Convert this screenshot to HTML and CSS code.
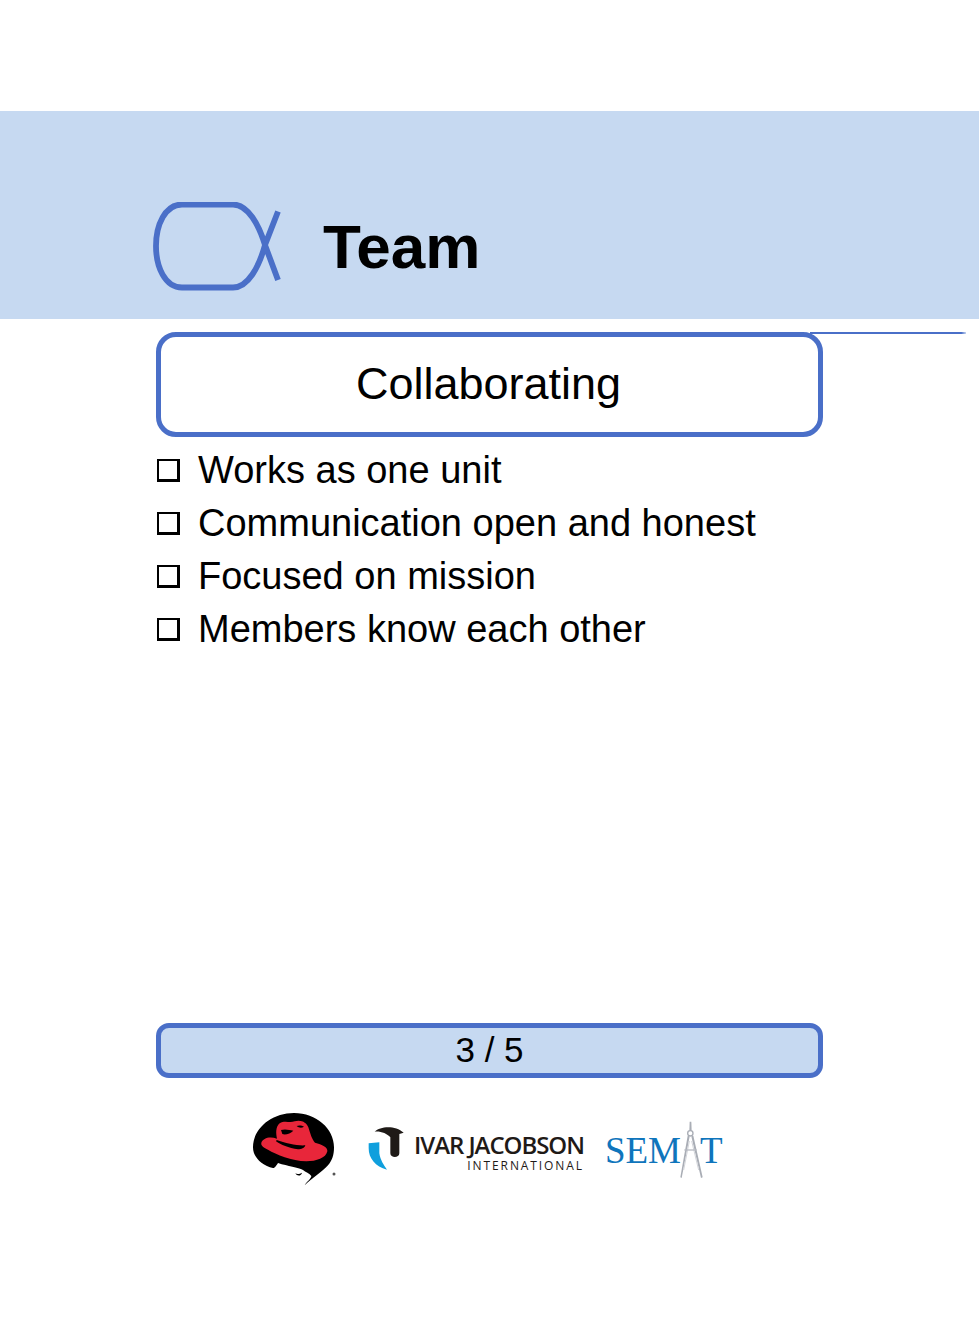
FILE: index.html
```html
<!DOCTYPE html>
<html lang="en">
<head>
<meta charset="utf-8">
<title>Team</title>
<link rel="stylesheet" href="styles.css">
</head>
<body>
<div class="page">
  <header class="band">
    <svg class="alpha" width="130" height="90" viewBox="0 0 130 90" aria-hidden="true">
      <path d="M125 9.5 L112 43 C106 65 95 85.5 80 85.5 H29 C12 85.5 3 65 3 44 C3 23 12 2.5 29 2.5 H80 C95 2.5 106 23 112 43 L125 78" fill="none" stroke="#4a6fc8" stroke-width="5.8"/>
    </svg>
    <h1 class="title">Team</h1>
  </header>
  <main class="content">
    <section class="state">
      <h2 class="state-name">Collaborating</h2>
    </section>
    <ul class="checklist">
      <li class="check"><span class="box"></span>Works as one unit</li>
      <li class="check"><span class="box"></span>Communication open and honest</li>
      <li class="check"><span class="box"></span>Focused on mission</li>
      <li class="check"><span class="box"></span>Members know each other</li>
    </ul>
    <div class="progress">3 / 5</div>
  </main>
  <footer class="logos">
    <svg class="redhat" width="95" height="82" viewBox="0 0 285 246" aria-hidden="true">
      <path d="M15 118 C15 62 70 15 138 15 C205 15 258 62 258 118 C258 142 252 158 240 172 C222 192 190 212 170 232 C175 222 190 212 190 204 C185 196 172 192 165 186 C150 178 120 175 90 165 C85 172 82 180 75 180 C45 174 15 150 15 118 Z" fill="#000"/>
      <path d="M142 196 C148 200 156 198 162 194 C160 204 148 206 142 196 Z" fill="#000"/>
      <path d="M40 104 C45 90 65 84 87 92 C84 76 82 58 95 46 C110 36 125 46 140 40 C160 34 176 44 181 58 C187 76 191 94 201 104 C222 109 240 118 238 130 C234 150 205 160 175 160 C130 158 85 140 60 125 C48 118 38 114 40 104 Z" fill="#e8263a"/>
      <path d="M86 96 C112 106 150 114 172 112 C170 120 160 124 150 124 C122 120 98 110 84 100 Z" fill="#000"/>
      <path d="M99 66 C112 62 124 66 136 68 C128 76 112 82 103 78 Z" fill="#000"/>
      <path d="M146 54 C152 51 162 52 168 56 C160 61 152 59 146 54 Z" fill="#000"/>
      <circle cx="258" cy="198" r="4.5" fill="#555"/>
    </svg>
    <div class="ivar">
      <svg class="ivar-mark" width="50" height="56" viewBox="0 0 150 168" aria-hidden="true">
        <path d="M38 35 C55 18 100 15 125 38 L112 42 L112 100 C112 115 85 115 85 100 L85 52 C75 40 55 33 38 35 Z" fill="#1f1a17"/>
        <path d="M20 70 L52 67 L52 100 C55 120 65 135 75 149 C40 140 20 115 20 85 Z" fill="#0f9fdd"/>
      </svg>
      <div class="ivar-text">
        <span class="ivar-name">IVAR JACOBSON</span>
        <span class="ivar-sub">INTERNATIONAL</span>
      </div>
    </div>
    <div class="semat">
      <span class="semat-text">SEM</span>
      <svg class="compass" width="60" height="70" viewBox="0 0 180 210" aria-hidden="true">
        <path d="M71 20 H76 L77 48 H70 Z" fill="#a9adb5"/>
        <circle cx="73" cy="55" r="8" fill="#fff" stroke="#a9adb5" stroke-width="4"/>
        <path d="M65 62 L71 64 L47 189 L43 187 Z M82 62 L76 64 L105 189 L110 187 Z" fill="#a9adb5"/>
        <path d="M70 78 L53 165 M77 78 L98 165" stroke="#d3d5da" stroke-width="3" fill="none"/>
        <path d="M55 105 H92" stroke="#b9bcc3" stroke-width="4" fill="none"/>
      </svg>
      <span class="semat-text semat-t">T</span>
    </div>
  </footer>
</div>
</body>
</html>
```
FILE: styles.css
```css
html, body {
  margin: 0;
  padding: 0;
  background: #fff;
}
.page {
  width: 979px;
  height: 1332px;
  padding-top: 111px;
  box-sizing: border-box;
  overflow: hidden;
  font-family: "Liberation Sans", Arial, sans-serif;
  color: #000;
}
.band {
  height: 208px;
  background: #c6d9f1;
  display: flex;
  align-items: flex-start;
  padding: 91px 0 0 153px;
  box-sizing: border-box;
}
.alpha {
  flex: none;
  display: block;
}
.title {
  margin: 5px 0 0 40px;
  font-size: 62px;
  line-height: 80px;
  font-weight: 700;
}
.content {
  width: 667px;
  margin: 13px 0 0 156px;
}
.state {
  position: relative;
  height: 105px;
  box-sizing: border-box;
  border: 5px solid #4a6fc8;
  border-radius: 20px;
  background: #fff;
  display: flex;
  align-items: center;
  justify-content: center;
}
.state::after {
  content: "";
  position: absolute;
  left: 649px;
  top: -5px;
  width: 156px;
  height: 2px;
  background: linear-gradient(to right, #4a6fc8 97%, #c6d5ef);
}
.state-name {
  margin: 0 2px 1px 0;
  font-size: 45px;
  line-height: 52px;
  font-weight: 400;
}
.checklist {
  list-style: none;
  margin: 7px 0 0;
  padding: 0;
}
.check {
  height: 53px;
  display: flex;
  align-items: center;
  font-size: 38px;
}
.box {
  flex: none;
  box-sizing: border-box;
  width: 23px;
  height: 23px;
  margin: 0 18px 0 1px;
  border: 2px solid #000;
  border-right-width: 3px;
  border-bottom-width: 3px;
  background: #fff;
}
.progress {
  margin-top: 367px;
  height: 55px;
  box-sizing: border-box;
  border: 5px solid #4a6fc8;
  border-radius: 13px;
  background: #c6d9f1;
  text-align: center;
  font-size: 35px;
  line-height: 44px;
}
.logos {
  display: flex;
  align-items: flex-start;
  margin: 30px 0 0 248px;
}
.redhat {
  flex: none;
  display: block;
}
.ivar {
  display: flex;
  margin: 12px 0 0 19px;
}
.ivar-mark {
  flex: none;
  display: block;
}
.ivar-text {
  margin: 13px 0 0 2px;
  display: flex;
  flex-direction: column;
  align-items: flex-end;
  font-family: "Open Sans", sans-serif;
  color: #1f1a17;
}
.ivar-name {
  font-size: 24px;
  line-height: 24px;
  font-weight: 600;
  letter-spacing: -1.05px;
  white-space: nowrap;
}
.ivar-sub {
  font-size: 12px;
  line-height: 14px;
  margin-top: 2px;
  letter-spacing: 1.9px;
  white-space: nowrap;
}
.semat {
  display: flex;
  align-items: flex-start;
  margin: 7px 0 0 21px;
  color: #0f75bc;
}
.semat-text {
  font-family: "Liberation Serif", serif;
  font-size: 37px;
  line-height: 46px;
  margin-top: 13px;
}
.compass {
  flex: none;
  display: block;
  margin-left: -15px;
  position: relative;
  z-index: 1;
}
.semat-t {
  margin-left: -26px;
}
```
